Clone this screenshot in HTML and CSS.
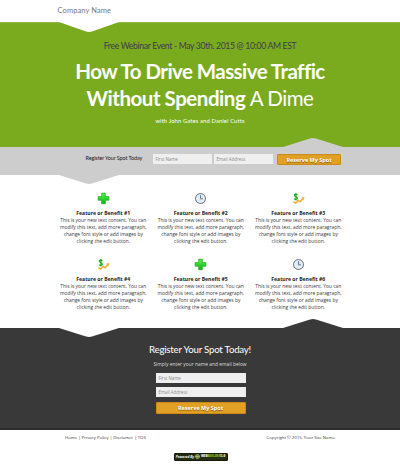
FILE: index.html
```html
<!DOCTYPE html>
<html lang="en">
<head>
<meta charset="utf-8">
<title>Free Webinar Event</title>
<link rel="stylesheet" href="styles.css">
</head>
<body>
<svg class="defs" width="0" height="0">
  <defs>
    <linearGradient id="leaf" x2="0" y2="1"><stop stop-color="#5ff04c"/><stop offset="1" stop-color="#00b815"/></linearGradient>
    <symbol id="plus" viewBox="0 0 14 14"><path d="M5 1.2h4v3.7h3.8v4H9v3.8H5V8.900H1.200v-4H5z" fill="url(#leaf)" stroke="#18a51c" stroke-width=".7" stroke-linejoin="round"/></symbol>
    <symbol id="clock" viewBox="0 0 14 14"><circle cx="7" cy="7" r="5.300" fill="#d9edff" stroke="#74777d" stroke-width="1.2"/><circle cx="7" cy="7" r="4.200" fill="none" stroke="#f4faff" stroke-width=".8"/><path d="M7 3.500V7.300h2.600" fill="none" stroke="#4b6b9c" stroke-width="1"/><circle cx="7" cy="7.300" r=".8" fill="#e69450"/></symbol>
    <symbol id="money" viewBox="0 0 14 14"><path d="M1.500 10.500l2.600 1.500L6.500 9l2.300 1.600 3-3.600" fill="none" stroke="#f0ad2c" stroke-width="1.600"/><path d="M9.800 5.800l3.600-.4-.6 3.400z" fill="#f2b545"/><path d="M5.800 3C5 2 2.500 2 2.500 3.600S5.800 5 5.800 6.600 3 8.300 2.100 7.100M4.200 1v8.200" fill="none" stroke="#16ad18" stroke-width="1.200"/></symbol>
  </defs>
</svg>
<header class="top"><span class="company">Company Name</span></header>
<section class="hero">
  <svg class="notch down" viewBox="0 0 60 9" preserveAspectRatio="none"><path d="M0 0h60L33 8.500Q30 9.300 27 8.500z" fill="#fff"/></svg>
  <p class="event">Free Webinar Event - May 30th. 2015 @ 10:00 AM EST</p>
  <h1><span class="line one">How To Drive Massive Traffic</span><span class="line two">Without Spending <span class="thin">A Dime</span></span></h1>
  <p class="with">with John Gates and Daniel Cutts</p>
</section>
<section class="bar">
  <svg class="notch down" viewBox="0 0 60 9"><path d="M0 0h60L33 8.500Q30 9.300 27 8.500z" fill="#cdcdcd"/></svg>
  <svg class="notch up" viewBox="0 0 60 9"><path d="M0 9h60L33 .5Q30-.3 27 .5z" fill="#cdcdcd"/></svg>
  <span class="label">Register Your Spot Today</span>
  <div class="input">First Name</div>
  <div class="input">Email Address</div>
  <div class="button">Reserve My Spot</div>
</section>
<main class="grid">
  <article><svg class="icon"><use href="#plus"/></svg><h3>Feature or Benefit #1</h3><p>This is your new text content. You can<br>modify this text, add more paragraph,<br>change font style or add images by<br>clicking the edit button.</p></article>
  <article><svg class="icon"><use href="#clock"/></svg><h3>Feature or Benefit #2</h3><p>This is your new text content. You can<br>modify this text, add more paragraph,<br>change font style or add images by<br>clicking the edit button.</p></article>
  <article><svg class="icon"><use href="#money"/></svg><h3>Feature or Benefit #3</h3><p>This is your new text content. You can<br>modify this text, add more paragraph,<br>change font style or add images by<br>clicking the edit button.</p></article>
  <article><svg class="icon"><use href="#money"/></svg><h3>Feature or Benefit #4</h3><p>This is your new text content. You can<br>modify this text, add more paragraph,<br>change font style or add images by<br>clicking the edit button.</p></article>
  <article><svg class="icon"><use href="#plus"/></svg><h3>Feature or Benefit #5</h3><p>This is your new text content. You can<br>modify this text, add more paragraph,<br>change font style or add images by<br>clicking the edit button.</p></article>
  <article><svg class="icon"><use href="#clock"/></svg><h3>Feature or Benefit #6</h3><p>This is your new text content. You can<br>modify this text, add more paragraph,<br>change font style or add images by<br>clicking the edit button.</p></article>
</main>
<section class="signup">
  <svg class="notch down" viewBox="0 0 60 9"><path d="M0 0h60L33 8.500Q30 9.300 27 8.500z" fill="#fff"/></svg>
  <svg class="notch up" viewBox="0 0 60 9"><path d="M0 9h60L33 .5Q30-.3 27 .5z" fill="#393939"/></svg>
  <h2>Register Your Spot Today!</h2>
  <p>Simply enter your name and email below</p>
  <div class="input">First Name</div>
  <div class="input">Email Address</div>
  <div class="button">Reserve My Spot</div>
</section>
<footer>
  <div class="links"><span class="nav">Home | Privacy Policy | Disclamer | TOS</span><span class="copy">Copyright © 2015. Your Site Name.</span></div>
  <div class="badge"><i>Powered By</i><svg viewBox="0 0 6 6"><circle cx="3" cy="3" r="2.400" fill="#63842b" stroke="#c8d39c" stroke-width=".7"/><path d="M.8 3h4.400" stroke="#dde5c0" stroke-width=".6"/></svg><b>WEB<em>BUILDER</em>5.0</b></div>
</footer>
</body>
</html>
```
FILE: styles.css
```css
* { box-sizing: border-box; }
body { margin: 0; width: 400px; height: 464px; overflow: hidden; background: #fff; color: #3a3a3a; font-family: "Open Sans", "Noto Sans", sans-serif; font-size: 4.900px; }
h1, h2, h3, p { margin: 0; font-weight: 400; white-space: nowrap; }
.defs { position: absolute; }
.top { height: 22px; padding: 5px 0 0 57.500px; }
.company { display: block; font: 7.500px/12px Lato, sans-serif; letter-spacing: .1px; color: #777; white-space: nowrap; }
.hero, .bar, .signup { position: relative; }
.hero { height: 125px; background: #7aab1f; border-top: 1px solid #90b94b; padding-top: 17px; text-align: center; color: #fff; }
.notch { position: absolute; width: 60px; height: 9px; display: block; }
.notch.down { left: 58.500px; top: 0; }
.hero .notch.down { top: -1px; height: 10px; }
.notch.up { left: 283px; top: -9px; }
.bar .notch.down { top: 28px; }
.event { font: 8.700px/12px Lato, sans-serif; letter-spacing: -.36px; color: #403b50; }
h1 { margin-top: 6px; }
.line { display: block; font: 700 20.500px/27px Lato, sans-serif; letter-spacing: -.56px; }
.line.two { letter-spacing: -.47px; }
.thin { font-weight: 400; }
.with { margin-top: 4px; font: 5.800px/10px Lato, sans-serif; letter-spacing: .14px; }
.bar { height: 28px; background: #cdcdcd; display: flex; padding: 7px 0 0 85.500px; }
.label { width: 67px; font: 5.500px/8px Lato, sans-serif; letter-spacing: -.12px; color: #222; white-space: nowrap; }
.input { height: 10px; background: #efefef; color: #8b8b8b; font-size: 4.400px; line-height: 10.500px; padding-left: 3px; text-align: left; white-space: nowrap; }
.bar .input { width: 59.500px; margin-right: 1.500px; }
.button { background: #e0a023; border: .5px solid #c98c19; border-radius: 1px; color: #fff; font-weight: 700; font-size: 5.500px; line-height: 10px; height: 11px; text-align: center; text-shadow: 0 .5px 1px #835b10; white-space: nowrap; }
.bar .button { width: 64px; margin-left: 2.500px; }
.grid { height: 153px; display: grid; grid-template-columns: repeat(3, 97.500px); grid-template-rows: 66px 66px; padding: 17px 0 0 54.500px; text-align: center; }
.icon { display: block; width: 13px; height: 13px; margin: 0 auto; }
h3 { margin-top: 4px; font-weight: 700; font-size: 5.100px; line-height: 8px; color: #222; }
.grid p { line-height: 6.900px; }
.signup { height: 102px; background: #393939; border-bottom: 2px solid #2d2d2d; padding-top: 14px; color: #fff; text-align: center; }
h2 { font: 9.700px/14px Lato, sans-serif; letter-spacing: -.22px; }
.signup p { margin-top: 4px; line-height: 8px; color: #ddd; }
.signup .input { width: 90px; margin: 4.500px 0 0 155.500px; }
.signup .button { width: 90px; height: 12px; line-height: 11px; margin: 4.500px 0 0 155.500px; }
.links { display: flex; justify-content: space-between; padding: 3px 64px 0 65px; line-height: 8px; font-size: 4.300px; }
.badge { display: flex; align-items: center; justify-content: center; gap: 1px; width: 54px; height: 8px; margin: 11.500px 0 0 173.500px; background: #252d12; border: .5px solid #151b08; border-radius: 1px; color: #f2f2f2; font: 700 3.300px/7px "Open Sans", sans-serif; white-space: nowrap; }
.badge svg { width: 5px; height: 5px; }
.badge b { font-size: 3px; }
.badge em { color: #8dc21f; font-style: normal; }
```
